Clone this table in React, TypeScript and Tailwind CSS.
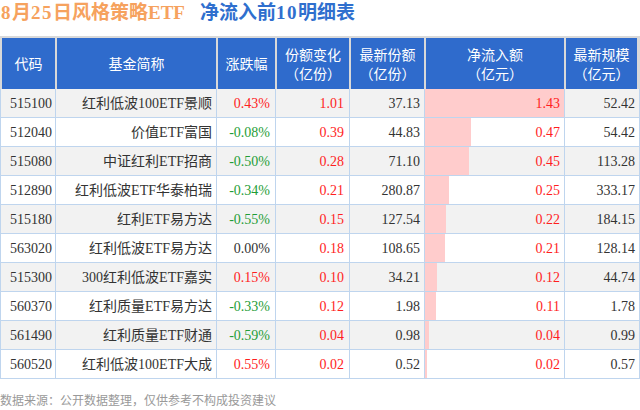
import React from "react";

type Row = {
  code: string;
  name: string;
  chg: string;
  share: string;
  latest: string;
  flow: number;
  scale: string;
};

const rows: Row[] = [
  { code: "515100", name: "红利低波100ETF景顺", chg: "0.43%", share: "1.01", latest: "37.13", flow: 1.43, scale: "52.42" },
  { code: "512040", name: "价值ETF富国", chg: "-0.08%", share: "0.39", latest: "44.83", flow: 0.47, scale: "54.42" },
  { code: "515080", name: "中证红利ETF招商", chg: "-0.50%", share: "0.28", latest: "71.10", flow: 0.45, scale: "113.28" },
  { code: "512890", name: "红利低波ETF华泰柏瑞", chg: "-0.34%", share: "0.21", latest: "280.87", flow: 0.25, scale: "333.17" },
  { code: "515180", name: "红利ETF易方达", chg: "-0.55%", share: "0.15", latest: "127.54", flow: 0.22, scale: "184.15" },
  { code: "563020", name: "红利低波ETF易方达", chg: "0.00%", share: "0.18", latest: "108.65", flow: 0.21, scale: "128.14" },
  { code: "515300", name: "300红利低波ETF嘉实", chg: "0.15%", share: "0.10", latest: "34.21", flow: 0.12, scale: "44.74" },
  { code: "560370", name: "红利质量ETF易方达", chg: "-0.33%", share: "0.12", latest: "1.98", flow: 0.11, scale: "1.78" },
  { code: "561490", name: "红利质量ETF财通", chg: "-0.59%", share: "0.04", latest: "0.98", flow: 0.04, scale: "0.99" },
  { code: "560520", name: "红利低波100ETF大成", chg: "0.55%", share: "0.02", latest: "0.52", flow: 0.02, scale: "0.57" },
];

function chgColor(v: string) {
  if (v.startsWith("-")) return "text-[#1f9e37]";
  if (parseFloat(v) === 0) return "text-[#333333]";
  return "text-[#ff1e1e]";
}

export default function App() {
  const maxFlow = 1.43;
  return (
    <div className="relative w-[640px] h-[410px] bg-white overflow-hidden font-['Liberation_Serif','Noto_Sans_CJK_SC',serif]">
      {/* Title */}
      <div className="h-[36px] flex items-start pl-px">
        <div className="h-[25px] leading-[25px] text-[19px] font-bold flex">
          <span className="text-[#f6a25e]">
            <span className="tracking-[1.5px]">8</span>月<span className="tracking-[1.5px]">25</span>日风格策略ETF
          </span>
          <span className="ml-[15px] text-[#2f6fce]">
            净流入前<span className="tracking-[1.5px]">10</span>明细表
          </span>
        </div>
      </div>

      {/* Header */}
      <div className="bg-[#d9d9d9] pt-[2px] pl-[2px] pr-[3px]">
        <div className="grid grid-cols-[53px_159px_57px_72px_73px_138px_71px] gap-x-[2px] font-['Noto_Sans_CJK_SC',sans-serif] text-[14px] leading-[19px] text-white">
          {[
            ["代码"],
            ["基金简称"],
            ["涨跌幅"],
            ["份额变化", "（亿份）"],
            ["最新份额", "（亿份）"],
            ["净流入额", "（亿元）"],
            ["最新规模", "（亿元）"],
          ].map((lines, i) => (
            <div key={i} className="h-[51px] bg-[#2f6bcc] flex flex-col items-center justify-center">
              {lines.map((l, j) => (
                <div key={j} className="whitespace-nowrap">{l}</div>
              ))}
            </div>
          ))}
        </div>
      </div>

      {/* Body */}
      <div className="bg-[#bfd5ee] px-px pb-px flex flex-col gap-y-px text-[14px] text-[#333333]">
        {rows.map((r, i) => {
          const bg = i % 2 === 0 ? "bg-[#f2f2f2]" : "bg-white";
          return (
            <div key={r.code} className="grid grid-cols-[54px_160px_58px_73px_74px_139px_74px] gap-x-px h-[28px]">
              <div className={`${bg} flex items-center justify-end pr-[3px]`}>{r.code}</div>
              <div className={`${bg} flex items-center justify-end pr-[4px] whitespace-nowrap`}>{r.name}</div>
              <div className={`${bg} flex items-center justify-end pr-[5px] ${chgColor(r.chg)}`}>{r.chg}</div>
              <div className={`${bg} flex items-center justify-end pr-[5px] text-[#ff1e1e]`}>{r.share}</div>
              <div className={`${bg} flex items-center justify-end pr-[4px]`}>{r.latest}</div>
              <div className={`${bg} relative flex items-center justify-end pr-[4px] text-[#ff1e1e]`}>
                <div
                  className="absolute left-0 top-0 bottom-0 bg-[#ffcccc]"
                  style={{ width: `${(r.flow / maxFlow) * 139}px` }}
                />
                <span className="relative">{r.flow.toFixed(2)}</span>
              </div>
              <div className={`${bg} flex items-center justify-end pr-[4px]`}>{r.scale}</div>
            </div>
          );
        })}
      </div>

      {/* Footer */}
      <div className="pt-[13px] text-[12px] leading-[16px] text-[#999999] font-['Noto_Sans_CJK_SC',sans-serif] whitespace-nowrap">
        数据来源：公开数据整理，仅供参考不构成投资建议
      </div>
    </div>
  );
}
